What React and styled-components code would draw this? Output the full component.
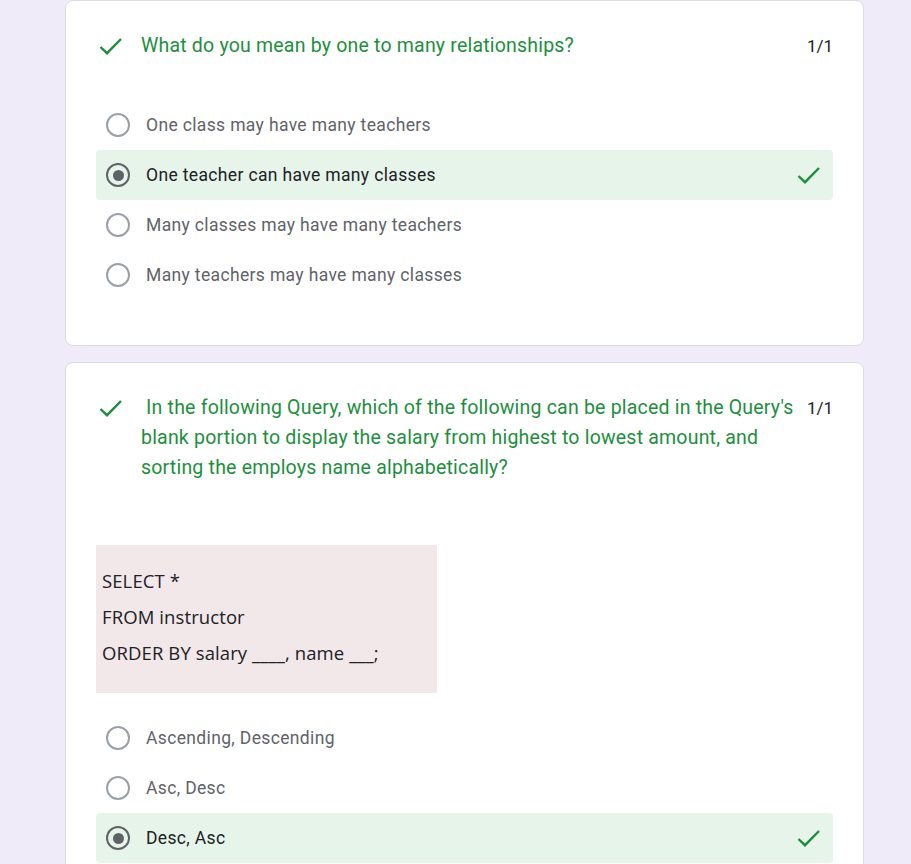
import React from 'react'
import styled, { createGlobalStyle } from 'styled-components';

const GlobalStyle = createGlobalStyle`
  body {
    margin: 0;
    background: #f0ebf8;
    font-family: Roboto, "Liberation Sans", sans-serif;
  }
`;

const Page = styled.div`
  display: flex;
  flex-direction: column;
  gap: 16px;
  padding: 0 47px 0 65px;
  height: 864px;
  overflow: hidden;
`;

const Card = styled.div`
  background: #fff;
  border: 1px solid #dadce0;
  border-radius: 8px;
  padding: ${props => props.top}px 30px ${props => props.bottom}px 30px;
  box-sizing: border-box;
  flex-shrink: 0;
`;

const Header = styled.div`
  display: flex;
  align-items: flex-start;
`;

const IconBox = styled.span`
  display: flex;
  width: 24px;
  height: 30px;
  align-items: center;
  margin-left: 3px;
  flex-shrink: 0;
`;

const Title = styled.div`
  flex: 1;
  color: #1e8e3e;
  font-size: 19.5px;
  letter-spacing: 0.2px;
  line-height: 30px;
  margin-left: 18px;
  padding-right: 10px;
  white-space: pre-wrap;
`;

const Points = styled.div`
  color: #202124;
  font-size: 17px;
  line-height: 30px;
`;

const Options = styled.div`
  display: flex;
  flex-direction: column;
  margin-top: ${props => props.top}px;
`;

const Option = styled.div`
  display: flex;
  align-items: center;
  height: 50px;
  padding: 0 12px 0 10px;
  border-radius: 4px;
  background: ${props => props.correct ? '#e6f4ea' : 'transparent'};
`;

const Radio = styled.span`
  width: 24px;
  height: 24px;
  box-sizing: border-box;
  border-radius: 50%;
  border: 2px solid ${props => props.checked ? '#5f6368' : '#9aa0a6'};
  display: flex;
  align-items: center;
  justify-content: center;
  flex-shrink: 0;

  &::after {
    content: '';
    display: ${props => props.checked ? 'block' : 'none'};
    width: 11px;
    height: 11px;
    border-radius: 50%;
    background: #5f6368;
  }
`;

const Label = styled.span`
  flex: 1;
  margin-left: 16px;
  font-size: 17.5px;
  letter-spacing: 0.35px;
  color: ${props => props.checked ? '#202124' : '#5f6368'};
`;

const Snippet = styled.div`
  width: 341px;
  height: 148px;
  margin-top: 62px;
  background: #f2e8ea;
  box-sizing: border-box;
  padding: 18px 6px;
  display: flex;
  flex-direction: column;
  font-family: "Open Sans", "Liberation Sans", sans-serif;
  font-size: 18.5px;
  color: #202124;
  letter-spacing: 0.1px;

  div {
    line-height: 36px;
  }
`;

function Check() {
  return (
    <svg width="24" height="24" viewBox="0 0 24 24">
      <polyline points="1.5,13 8,19.2 22,5" fill="none" stroke="#1e8e3e" strokeWidth="2.4" />
    </svg>
  );
}

function OptionList({ items, answer, top }) {
  return (
    <Options top={top}>
      {items.map(item => {
        const checked = item === answer;
        return (
          <Option key={item} correct={checked}>
            <Radio checked={checked} />
            <Label checked={checked}>{item}</Label>
            {checked && <Check />}
          </Option>
        );
      })}
    </Options>
  );
}

export default function App() {
  return (
    <>
      <GlobalStyle />
      <Page>
        <Card top={30} bottom={45}>
          <Header>
            <IconBox><Check /></IconBox>
            <Title>What do you mean by one to many relationships?</Title>
            <Points>1/1</Points>
          </Header>
          <OptionList
            top={39}
            answer="One teacher can have many classes"
            items={[
              'One class may have many teachers',
              'One teacher can have many classes',
              'Many classes may have many teachers',
              'Many teachers may have many classes',
            ]}
          />
        </Card>
        <Card top={30} bottom={30}>
          <Header>
            <IconBox><Check /></IconBox>
            <Title>{' In the following Query, which of the following can be placed in the Query\'s blank portion to display the salary from highest to lowest amount, and sorting the employs name alphabetically?'}</Title>
            <Points>1/1</Points>
          </Header>
          <Snippet>
            <div>SELECT *</div>
            <div>FROM instructor</div>
            <div>ORDER BY salary ____, name ___;</div>
          </Snippet>
          <OptionList
            top={20}
            answer="Desc, Asc"
            items={['Ascending, Descending', 'Asc, Desc', 'Desc, Asc']}
          />
        </Card>
      </Page>
    </>
  );
}
